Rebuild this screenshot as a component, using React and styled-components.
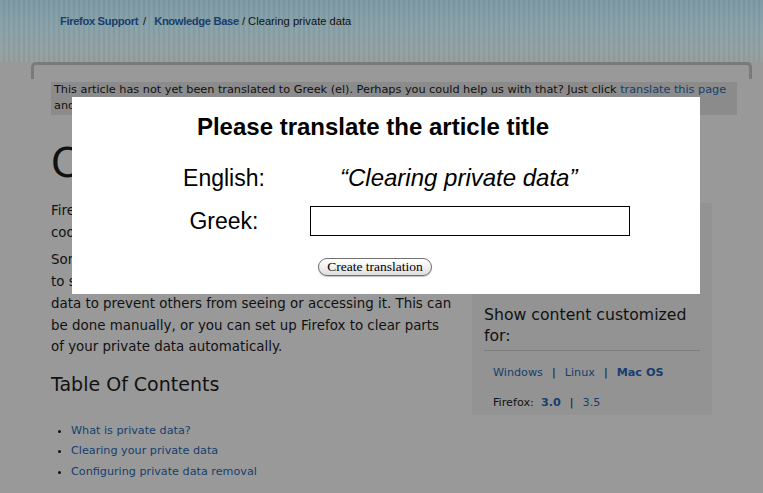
import React from 'react';
import styled, { createGlobalStyle } from 'styled-components';

const GlobalStyle = createGlobalStyle`
    * {
        box-sizing: border-box;
    }
    body {
        margin: 0;
        background: #999999;
        font-family: "DejaVu Sans", Verdana, sans-serif;
        color: #111;
    }
`;

const Page = styled.div`
    position: relative;
    width: 763px;
    height: 493px;
    overflow: hidden;
    background: #999999;
`;

const Masthead = styled.div`
    height: 62px;
    padding: 14px 0 0 60px;
    background:
        repeating-linear-gradient(90deg, rgba(255, 255, 255, 0.03) 0 3px, rgba(0, 0, 0, 0.03) 3px 5px),
        linear-gradient(180deg, #7b98a2 0%, #86a0a8 40%, #92a0a2 80%, #969c9c 100%);
`;

const Breadcrumbs = styled.div`
    font-family: "Liberation Sans", Arial, sans-serif;
    font-size: 11.2px;
    line-height: 14px;
    color: #111;

    a {
        color: #163e6e;
        font-weight: bold;
        text-decoration: none;
        letter-spacing: -0.35px;
    }
    span {
        margin: 0 8px 0 5px;
    }
`;

const BoxCap = styled.div`
    height: 17px;
    margin: 0 11px 0 31px;
    border: 3px solid #7a7a78;
    border-bottom: none;
    border-radius: 5px 5px 0 0;
`;

const Main = styled.div`
    padding: 0 26px 0 51px;
`;

const Notice = styled.div`
    height: 33px;
    margin-top: 3px;
    padding: 0 3px;
    background: #8b8b8b;
    font-size: 11.3px;
    line-height: 16px;
    letter-spacing: -0.03px;

    a {
        color: #163e6e;
        text-decoration: none;
    }
`;

const Columns = styled.div`
    display: grid;
    grid-template-columns: 404px 240px;
    column-gap: 17px;
    align-items: start;
    margin-top: 24px;
`;

const Article = styled.div``;

const Title = styled.h1`
    margin: 0;
    font-size: 40px;
    font-weight: normal;
    line-height: 48px;
    white-space: nowrap;
`;

const Para = styled.p`
    margin: ${p => p.$first ? '13px' : '6px'} 0 0;
    font-size: 13.4px;
    line-height: 21.7px;
`;

const Subhead = styled.h2`
    margin: 15px 0 0;
    font-size: 19px;
    font-weight: normal;
    line-height: 23px;
`;

const Toc = styled.ul`
    margin: 25px 0 0;
    padding-left: 20px;
    font-size: 11.2px;
    line-height: 20.5px;

    li::marker {
        color: #111;
    }
    a {
        color: #163e6e;
        text-decoration: none;
    }
`;

const Sidebar = styled.div`
    margin-top: 64px;
    padding: 101px 12px 3px;
    background: #939393;
`;

const SideHeading = styled.h3`
    margin: 0;
    font-size: 15.7px;
    font-weight: normal;
    line-height: 21px;
    padding-bottom: 4px;
    border-bottom: 1px solid #7c7c7c;
`;

const OptionRow = styled.div`
    margin-top: ${p => p.$gap}px;
    padding-left: 9px;
    font-size: 11.2px;
    line-height: 18px;

    a {
        color: #163e6e;
        text-decoration: none;
    }
`;

const Sep = styled.span`
    margin: 0 9px;
`;

const Dialog = styled.div`
    position: absolute;
    left: 72px;
    top: 97px;
    width: 628px;
    height: 197px;
    padding: 16px 26px 0 0;
    background: #ffffff;
    font-family: "Liberation Sans", Arial, Helvetica, sans-serif;
    color: #000;
`;

const DialogTitle = styled.h2`
    margin: 0;
    text-align: center;
    font-size: 24px;
    font-weight: bold;
    line-height: 28px;
`;

const Form = styled.div`
    display: grid;
    grid-template-columns: 144px 320px;
    column-gap: 14px;
    row-gap: 14px;
    align-items: center;
    margin: 23px 0 0 80px;
`;

const Label = styled.div`
    text-align: center;
    font-size: 23px;
    line-height: 28px;
`;

const Original = styled.div`
    padding-left: 30px;
    font-size: 24px;
    font-style: italic;
    line-height: 28px;
    white-space: nowrap;
`;

const TextInput = styled.input`
    width: 320px;
    height: 30px;
    margin: 0;
    border: 1.5px solid #000;
    border-radius: 0;
    outline: none;
    background: #fff;
`;

const Actions = styled.div`
    display: flex;
    justify-content: center;
    margin-top: 22px;
    padding-left: 4px;
`;

const Button = styled.button`
    height: 18px;
    padding: 0 8px;
    border: 1px solid #707070;
    border-radius: 9px;
    background: linear-gradient(180deg, #ffffff 0%, #f1f1f1 50%, #dedede 100%);
    box-shadow: 0 1px 1px rgba(0, 0, 0, 0.25);
    font-family: "Liberation Serif", "Times New Roman", serif;
    font-size: 13.5px;
    line-height: 16px;
    color: #000;
`;

const App = () => {
    return (
        <Page>
            <GlobalStyle />
            <Masthead>
                <Breadcrumbs>
                    <a href="#">Firefox Support</a><span>/</span>
                    <a href="#">Knowledge Base</a> / Clearing private data
                </Breadcrumbs>
            </Masthead>
            <BoxCap />
            <Main>
                <Notice>
                    This article has not yet been translated to Greek (el). Perhaps you could help us with that? Just click <a href="#">translate this page</a> and start translating.
                </Notice>
                <Columns>
                    <Article>
                        <Title>Clearing private data</Title>
                        <Para $first>
                            Firefox stores private information such as history, forms, cookies and more for you.
                        </Para>
                        <Para>
                            Sometimes you want to delete all this information in order to safeguard your computer. Firefox can clear your private data to prevent others from seeing or accessing it. This can be done manually, or you can set up Firefox to clear parts of your private data automatically.
                        </Para>
                        <Subhead>Table Of Contents</Subhead>
                        <Toc>
                            <li><a href="#">What is private data?</a></li>
                            <li><a href="#">Clearing your private data</a></li>
                            <li><a href="#">Configuring private data removal</a></li>
                        </Toc>
                    </Article>
                    <Sidebar>
                        <SideHeading>Show content customized for:</SideHeading>
                        <OptionRow $gap={13}>
                            <a href="#">Windows</a><Sep>|</Sep>
                            <a href="#">Linux</a><Sep>|</Sep>
                            <a href="#"><b>Mac OS</b></a>
                        </OptionRow>
                        <OptionRow $gap={12}>
                            Firefox:&nbsp; <a href="#"><b>3.0</b></a><Sep>|</Sep>
                            <a href="#">3.5</a>
                        </OptionRow>
                    </Sidebar>
                </Columns>
            </Main>
            <Dialog>
                <DialogTitle>Please translate the article title</DialogTitle>
                <Form>
                    <Label>English:</Label>
                    <Original>“Clearing private data”</Original>
                    <Label>Greek:</Label>
                    <TextInput type="text" />
                </Form>
                <Actions>
                    <Button type="button">Create translation</Button>
                </Actions>
            </Dialog>
        </Page>
    );
};

export default App;
